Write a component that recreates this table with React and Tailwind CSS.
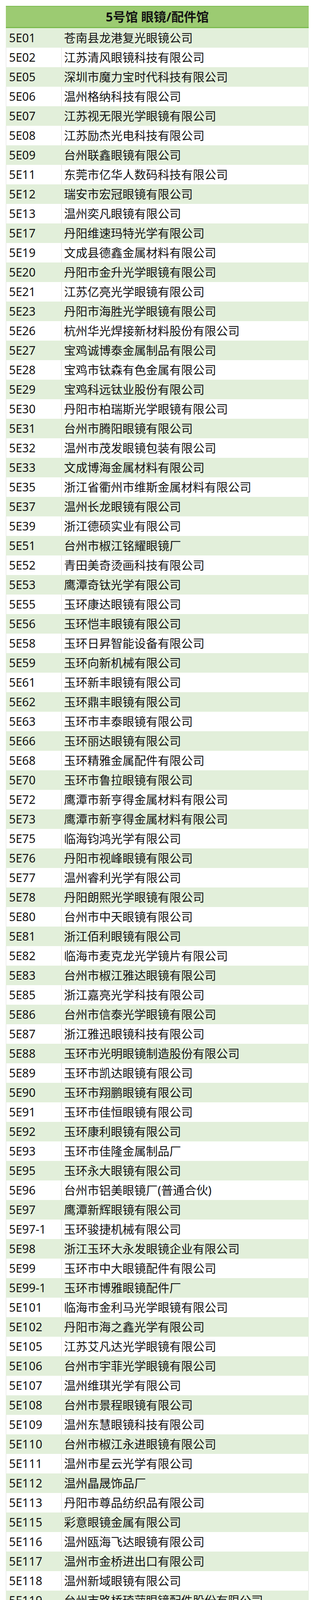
// App.jsx
const rows = [
  ["5E01", "苍南县龙港复光眼镜公司"],
  ["5E02", "江苏清风眼镜科技有限公司"],
  ["5E05", "深圳市魔力宝时代科技有限公司"],
  ["5E06", "温州格纳科技有限公司"],
  ["5E07", "江苏视无限光学眼镜有限公司"],
  ["5E08", "江苏励杰光电科技有限公司"],
  ["5E09", "台州联鑫眼镜有限公司"],
  ["5E11", "东莞市亿华人数码科技有限公司"],
  ["5E12", "瑞安市宏冠眼镜有限公司"],
  ["5E13", "温州奕凡眼镜有限公司"],
  ["5E17", "丹阳维速玛特光学有限公司"],
  ["5E19", "文成县德鑫金属材料有限公司"],
  ["5E20", "丹阳市金升光学眼镜有限公司"],
  ["5E21", "江苏亿亮光学眼镜有限公司"],
  ["5E23", "丹阳市海胜光学眼镜有限公司"],
  ["5E26", "杭州华光焊接新材料股份有限公司"],
  ["5E27", "宝鸡诚博泰金属制品有限公司"],
  ["5E28", "宝鸡市钛森有色金属有限公司"],
  ["5E29", "宝鸡科远钛业股份有限公司"],
  ["5E30", "丹阳市柏瑞斯光学眼镜有限公司"],
  ["5E31", "台州市腾阳眼镜有限公司"],
  ["5E32", "温州市茂发眼镜包装有限公司"],
  ["5E33", "文成博海金属材料有限公司"],
  ["5E35", "浙江省衢州市维斯金属材料有限公司"],
  ["5E37", "温州长龙眼镜有限公司"],
  ["5E39", "浙江德硕实业有限公司"],
  ["5E51", "台州市椒江铭耀眼镜厂"],
  ["5E52", "青田美奇烫画科技有限公司"],
  ["5E53", "鹰潭奇钛光学有限公司"],
  ["5E55", "玉环康达眼镜有限公司"],
  ["5E56", "玉环恺丰眼镜有限公司"],
  ["5E58", "玉环日昇智能设备有限公司"],
  ["5E59", "玉环向新机械有限公司"],
  ["5E61", "玉环新丰眼镜有限公司"],
  ["5E62", "玉环鼎丰眼镜有限公司"],
  ["5E63", "玉环市丰泰眼镜有限公司"],
  ["5E66", "玉环丽达眼镜有限公司"],
  ["5E68", "玉环精雅金属配件有限公司"],
  ["5E70", "玉环市鲁拉眼镜有限公司"],
  ["5E72", "鹰潭市新亨得金属材料有限公司"],
  ["5E73", "鹰潭市新亨得金属材料有限公司"],
  ["5E75", "临海钧鸿光学有限公司"],
  ["5E76", "丹阳市视峰眼镜有限公司"],
  ["5E77", "温州睿利光学有限公司"],
  ["5E78", "丹阳朗熙光学眼镜有限公司"],
  ["5E80", "台州市中天眼镜有限公司"],
  ["5E81", "浙江佰利眼镜有限公司"],
  ["5E82", "临海市麦克龙光学镜片有限公司"],
  ["5E83", "台州市椒江雅达眼镜有限公司"],
  ["5E85", "浙江嘉亮光学科技有限公司"],
  ["5E86", "台州市信泰光学眼镜有限公司"],
  ["5E87", "浙江雅迅眼镜科技有限公司"],
  ["5E88", "玉环市光明眼镜制造股份有限公司"],
  ["5E89", "玉环市凯达眼镜有限公司"],
  ["5E90", "玉环市翔鹏眼镜有限公司"],
  ["5E91", "玉环市佳恒眼镜有限公司"],
  ["5E92", "玉环康利眼镜有限公司"],
  ["5E93", "玉环市佳隆金属制品厂"],
  ["5E95", "玉环永大眼镜有限公司"],
  ["5E96", "台州市铝美眼镜厂(普通合伙)"],
  ["5E97", "鹰潭新辉眼镜有限公司"],
  ["5E97-1", "玉环骏捷机械有限公司"],
  ["5E98", "浙江玉环大永发眼镜企业有限公司"],
  ["5E99", "玉环市中大眼镜配件有限公司"],
  ["5E99-1", "玉环市博雅眼镜配件厂"],
  ["5E101", "临海市金利马光学眼镜有限公司"],
  ["5E102", "丹阳市海之鑫光学有限公司"],
  ["5E105", "江苏艾凡达光学眼镜有限公司"],
  ["5E106", "台州市宇菲光学眼镜有限公司"],
  ["5E107", "温州维琪光学有限公司"],
  ["5E108", "台州市景程眼镜有限公司"],
  ["5E109", "温州东慧眼镜科技有限公司"],
  ["5E110", "台州市椒江永进眼镜有限公司"],
  ["5E111", "温州市星云光学有限公司"],
  ["5E112", "温州晶晟饰品厂"],
  ["5E113", "丹阳市尊品纺织品有限公司"],
  ["5E115", "彩意眼镜金属有限公司"],
  ["5E116", "温州瓯海飞达眼镜有限公司"],
  ["5E117", "温州市金桥进出口有限公司"],
  ["5E118", "温州新域眼镜有限公司"],
  ["5E119", "台州市路桥琦萍眼镜配件股份有限公司"],
  ["5E120", "厦门格莱视光学有限公司"],
  ["5E121", "温州领力科技有限公司"],
  ["5E121", "温州市领力眼镜有限公司"],
  ["5E122", "厦门圣迪光学有限公司"],
  ["5E123", "浙江盈昌进出口有限公司"],
  ["5E125", "丹阳市明瀚光学眼镜有限公司"],
  ["5E128", "温州迈克光学有限公司"],
  ["5E130", "瑞安市金泰光学眼镜有限公司"],
  ["5E130-1", "瑞安市众诚眼镜有限公司"],
  ["5E132", "瑞安市拓林光学眼镜有限公司"],
  ["5E135", "瑞安市镜缘眼镜科技有限公司"],
  ["5E137", "温州三马眼镜有限公司"],
  ["5E138", "瑞安市帆高光学眼镜有限公司"],
  ["5E150", "温州市金宸胶板有限公司"],
  ["5E151", "瑞安市瑞发眼镜有限公司"],
  ["5E151-1", "瑞安市创客眼镜有限公司"],
  ["5E152", "瑞安市思银眼镜有限公司"],
  ["5E153", "温州市珺益眼镜有限公司"],
  ["5E155", "温州市嘉法眼镜有限公司"],
  ["5E156", "丽水瑞霸眼镜有限公司"],
  ["5E158", "台州酷斯拉眼镜有限公司"],
  ["5E160", "温州求质眼镜有限公司"],
  ["5E162", "广州帕特嘉斯眼镜有限公司"],
  ["5E163", "江苏欧胜眼镜有限公司"],
  ["5E163-1", "浙江同道眼镜有限公司"],
  ["5E165", "江苏省丹阳市杜光光学眼镜有限公司"],
  ["5E166", "温州天海国际经贸有限公司"],
];

const Row = ({ booth, name, shaded }) => {
  return (
    <div
      className={
        shaded
          ? "flex h-[50px] items-center bg-[#e2efda]"
          : "flex h-[50px] items-center bg-white border-x border-[#dcdcdc]"
      }
    >
      {/* Booth */}
      <div
        className={
          shaded
            ? "flex h-full w-[143px] shrink-0 items-center pl-[8px]"
            : "flex h-full w-[142px] shrink-0 items-center border-r border-[#dcdcdc] pl-[7px]"
        }
      >
        {booth}
      </div>
      {/* Company */}
      <div className="flex h-full flex-1 items-center pl-[6px] whitespace-nowrap">
        {name}
      </div>
    </div>
  );
};

export default function App() {
  return (
    <div className="min-h-[5488px] bg-white pt-[15px] font-['Noto_Sans','Noto_Sans_CJK_SC',sans-serif] text-[#141414]">
      <div className="mx-[15px] w-[776px]">
        {/* Header */}
        <div className="flex h-[57px] items-center justify-center border-t-2 border-b-[3px] border-[#7cbb4f] bg-[#9ccb72] text-[32px] font-bold leading-none">
          5号馆 眼镜/配件馆
        </div>

        {/* Rows */}
        <div className="text-[30px] leading-none">
          {rows.map(([booth, name], i) => (
            <Row key={i} booth={booth} name={name} shaded={i % 2 === 0} />
          ))}
        </div>

        {/* Bottom rule */}
        <div className="h-[2px] bg-[#f2c000]" />
      </div>
    </div>
  );
}
